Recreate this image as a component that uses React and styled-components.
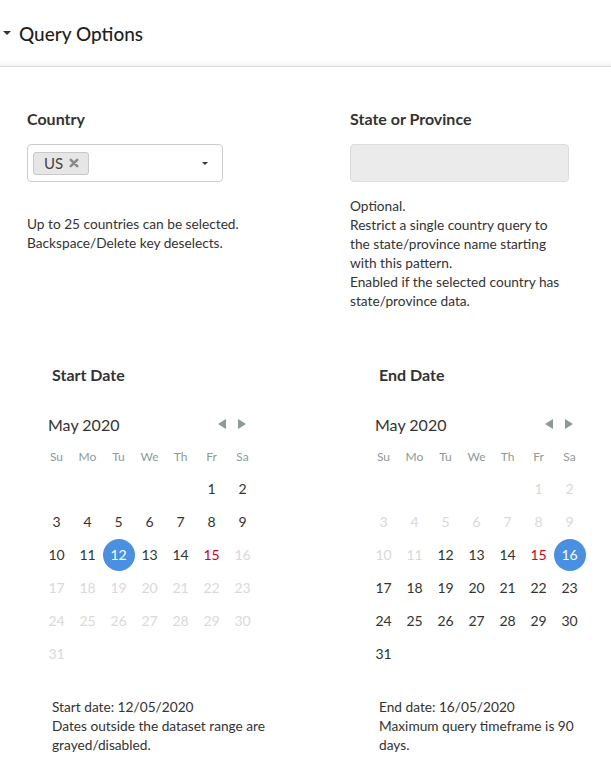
import React from "react";
import styled, { createGlobalStyle } from "styled-components";

const GlobalStyle = createGlobalStyle`
  body {
    margin: 0;
    background: #fff;
    font-family: Lato, "Noto Sans", sans-serif;
    color: #333;
  }
`;

const Header = styled.div`
  height: 66px;
  display: flex;
  align-items: center;
  gap: 8px;
  padding-left: 3px;
  border-bottom: 1px solid #dcdcdc;
  box-shadow: inset 0 -7px 6px -6px rgba(0, 0, 0, 0.08);
`;

const Caret = styled.span`
  width: 0;
  height: 0;
  border-left: ${(p) => p.size}px solid transparent;
  border-right: ${(p) => p.size}px solid transparent;
  border-top: ${(p) => p.size}px solid ${(p) => p.color || "#333"};
`;

const Title = styled.h2`
  margin: 0;
  font-size: 19px;
  font-weight: 500;
  color: #1f1f1f;
`;

const Content = styled.div`
  padding: 42px 0 0 27px;
`;

const FieldGrid = styled.div`
  display: grid;
  grid-template-columns: 323px 1fr;
`;

const Field = styled.div`
  display: flex;
  flex-direction: column;
`;

const Label = styled.div`
  font-size: 16px;
  font-weight: 700;
  line-height: 20px;
  color: #333;
  padding-left: ${(p) => p.indent || 0}px;
`;

const Select = styled.div`
  margin-top: 15px;
  width: 196px;
  height: 38px;
  box-sizing: border-box;
  border: 1px solid #ccc;
  border-radius: 4px;
  display: flex;
  align-items: center;
  justify-content: space-between;
  padding: 0 14px 0 5px;
`;

const Chip = styled.span`
  display: inline-flex;
  align-items: center;
  gap: 6px;
  height: 23px;
  box-sizing: border-box;
  padding: 0 9px 0 10px;
  background: #e6e6e6;
  border: 1px solid #c8c8c8;
  border-radius: 3px;
  font-size: 15px;
  color: #444;
`;

const DisabledInput = styled.div`
  margin-top: 15px;
  width: 219px;
  height: 38px;
  box-sizing: border-box;
  background: #ebebeb;
  border: 1px solid #dcdcdc;
  border-radius: 4px;
`;

const Help = styled.p`
  margin: ${(p) => p.top}px 0 0;
  padding-left: ${(p) => p.indent || 0}px;
  font-size: 13.7px;
  line-height: 19px;
  color: #333;
  width: ${(p) => p.width}px;
`;

const DateGrid = styled.div`
  display: grid;
  grid-template-columns: 327px 1fr;
  margin-top: 55px;
  padding-left: 14px;
`;

const Calendar = styled.div`
  margin-top: 23px;
  width: 217px;
`;

const MonthRow = styled.div`
  height: 32px;
  display: flex;
  align-items: center;
  justify-content: space-between;
  padding: 0 12px 0 7px;
  font-size: 16px;
`;

const Nav = styled.div`
  display: flex;
  gap: 12px;
`;

const Arrow = styled.span`
  width: 0;
  height: 0;
  border-top: 5px solid transparent;
  border-bottom: 5px solid transparent;
  ${(p) =>
    p.dir === "left"
      ? "border-right: 8px solid #8d9a99;"
      : "border-left: 8px solid #8d9a99;"}
`;

const Week = styled.div`
  display: grid;
  grid-template-columns: repeat(7, 31px);
  height: ${(p) => p.h}px;
  align-items: center;
  justify-items: center;
`;

const DayName = styled.span`
  font-size: 12px;
  color: #8d9a99;
`;

const Day = styled.span`
  width: 32px;
  height: 32px;
  border-radius: 50%;
  display: flex;
  align-items: center;
  justify-content: center;
  font-size: 14px;
  color: ${(p) =>
    p.selected ? "#fff" : p.disabled ? "#d9d9d9" : p.today ? "#d0021b" : "#333"};
  background: ${(p) => (p.selected ? "#4a90e2" : "transparent")};
`;

const dayNames = ["Su", "Mo", "Tu", "We", "Th", "Fr", "Sa"];

const weeks = (() => {
  const cells = [null, null, null, null, null];
  for (let d = 1; d <= 31; d++) cells.push(d);
  while (cells.length % 7) cells.push(null);
  const out = [];
  for (let i = 0; i < cells.length; i += 7) out.push(cells.slice(i, i + 7));
  return out;
})();

const MonthCalendar = ({ selected, min, max }) => (
  <Calendar>
    <MonthRow>
      <span>May 2020</span>
      <Nav>
        <Arrow dir="left" />
        <Arrow dir="right" />
      </Nav>
    </MonthRow>
    <Week h={32}>
      {dayNames.map((n) => (
        <DayName key={n}>{n}</DayName>
      ))}
    </Week>
    {weeks.map((w, i) => (
      <Week h={33} key={i}>
        {w.map((d, j) =>
          d ? (
            <Day
              key={j}
              selected={d === selected}
              disabled={d < min || d > max}
              today={d === 15}
            >
              {d}
            </Day>
          ) : (
            <span key={j} />
          )
        )}
      </Week>
    ))}
  </Calendar>
);

const CloseIcon = () => (
  <svg width="10" height="10" viewBox="0 0 10 10">
    <path
      d="M1.8 1.8 L8.2 8.2 M8.2 1.8 L1.8 8.2"
      stroke="#8a8a8a"
      strokeWidth="2.6"
      strokeLinecap="round"
    />
  </svg>
);

export default function App() {
  return (
    <>
      <GlobalStyle />
      <Header>
        <Caret size={4} color="#333" />
        <Title>Query Options</Title>
      </Header>
      <Content>
        <FieldGrid>
          <Field>
            <Label>Country</Label>
            <Select>
              <Chip>
                US
                <CloseIcon />
              </Chip>
              <Caret size={3.5} color="#333" />
            </Select>
            <Help top={32} width={260}>
              Up to 25 countries can be selected.
              <br />
              Backspace/Delete key deselects.
            </Help>
          </Field>
          <Field>
            <Label>State or Province</Label>
            <DisabledInput />
            <Help top={14} width={216}>
              Optional.
              <br />
              Restrict a single country query to the state/province name
              starting with this pattern.
              <br />
              Enabled if the selected country has state/province data.
            </Help>
          </Field>
        </FieldGrid>
        <DateGrid>
          <Field>
            <Label indent={11}>Start Date</Label>
            <MonthCalendar selected={12} min={1} max={15} />
            <Help top={27} indent={11} width={230}>
              Start date: 12/05/2020
              <br />
              Dates outside the dataset range are grayed/disabled.
            </Help>
          </Field>
          <Field>
            <Label indent={11}>End Date</Label>
            <MonthCalendar selected={16} min={12} max={31} />
            <Help top={27} indent={11} width={205}>
              End date: 16/05/2020
              <br />
              Maximum query timeframe is 90 days.
            </Help>
          </Field>
        </DateGrid>
      </Content>
    </>
  );
}
